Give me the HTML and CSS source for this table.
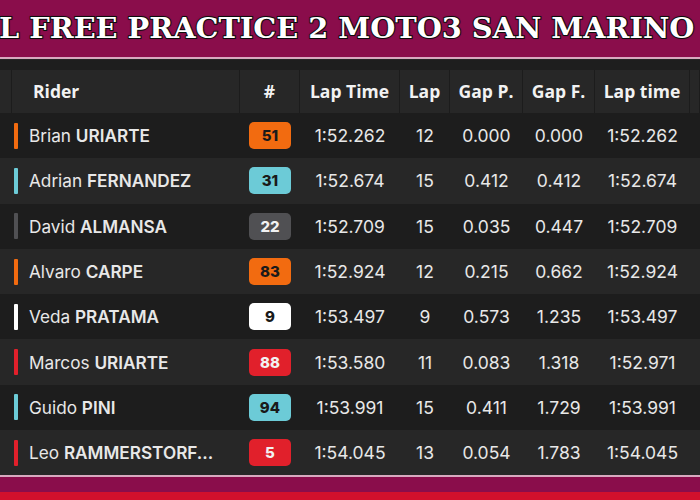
FILE: index.html
```html
<!DOCTYPE html>
<html>
<head>
<meta charset="utf-8">
<link rel="stylesheet" href="styles.css">
</head>
<body>
<div class="page">
  <header class="banner">
    <h1 class="title">L FREE PRACTICE 2 MOTO3 SAN MARINO</h1>
  </header>
  <div class="table">
    <div class="thead">
      <div class="th"></div>
      <div class="th th-rider">Rider</div>
      <div class="th">#</div>
      <div class="th">Lap Time</div>
      <div class="th">Lap</div>
      <div class="th">Gap P.</div>
      <div class="th">Gap F.</div>
      <div class="th">Lap time</div>
      <div class="th"></div>
    </div>
    <div class="row">
      <div class="cell"></div>
      <div class="cell rider"><span class="bar orange"></span><span>Brian <b>URIARTE</b></span></div>
      <div class="cell"><span class="badge orange">51</span></div>
      <div class="cell">1:52.262</div><div class="cell">12</div><div class="cell">0.000</div><div class="cell">0.000</div><div class="cell">1:52.262</div><div class="cell"></div>
    </div>
    <div class="row alt">
      <div class="cell"></div>
      <div class="cell rider"><span class="bar cyan"></span><span>Adrian <b>FERNANDEZ</b></span></div>
      <div class="cell"><span class="badge cyan">31</span></div>
      <div class="cell">1:52.674</div><div class="cell">15</div><div class="cell">0.412</div><div class="cell">0.412</div><div class="cell">1:52.674</div><div class="cell"></div>
    </div>
    <div class="row">
      <div class="cell"></div>
      <div class="cell rider"><span class="bar gray"></span><span>David <b>ALMANSA</b></span></div>
      <div class="cell"><span class="badge gray">22</span></div>
      <div class="cell">1:52.709</div><div class="cell">15</div><div class="cell">0.035</div><div class="cell">0.447</div><div class="cell">1:52.709</div><div class="cell"></div>
    </div>
    <div class="row alt">
      <div class="cell"></div>
      <div class="cell rider"><span class="bar orange"></span><span>Alvaro <b>CARPE</b></span></div>
      <div class="cell"><span class="badge orange">83</span></div>
      <div class="cell">1:52.924</div><div class="cell">12</div><div class="cell">0.215</div><div class="cell">0.662</div><div class="cell">1:52.924</div><div class="cell"></div>
    </div>
    <div class="row">
      <div class="cell"></div>
      <div class="cell rider"><span class="bar white"></span><span>Veda <b>PRATAMA</b></span></div>
      <div class="cell"><span class="badge white">9</span></div>
      <div class="cell">1:53.497</div><div class="cell">9</div><div class="cell">0.573</div><div class="cell">1.235</div><div class="cell">1:53.497</div><div class="cell"></div>
    </div>
    <div class="row alt">
      <div class="cell"></div>
      <div class="cell rider"><span class="bar red"></span><span>Marcos <b>URIARTE</b></span></div>
      <div class="cell"><span class="badge red">88</span></div>
      <div class="cell">1:53.580</div><div class="cell">11</div><div class="cell">0.083</div><div class="cell">1.318</div><div class="cell">1:52.971</div><div class="cell"></div>
    </div>
    <div class="row">
      <div class="cell"></div>
      <div class="cell rider"><span class="bar cyan"></span><span>Guido <b>PINI</b></span></div>
      <div class="cell"><span class="badge cyan">94</span></div>
      <div class="cell">1:53.991</div><div class="cell">15</div><div class="cell">0.411</div><div class="cell">1.729</div><div class="cell">1:53.991</div><div class="cell"></div>
    </div>
    <div class="row alt">
      <div class="cell"></div>
      <div class="cell rider"><span class="bar red"></span><span>Leo <b>RAMMERSTORF...</b></span></div>
      <div class="cell"><span class="badge red">5</span></div>
      <div class="cell">1:54.045</div><div class="cell">13</div><div class="cell">0.054</div><div class="cell">1.783</div><div class="cell">1:54.045</div><div class="cell"></div>
    </div>
  </div>
  <footer class="footer">
    <div class="footer-band"></div>
    <div class="footer-red"></div>
  </footer>
</div>
</body>
</html>
```

FILE: styles.css
```css
* { box-sizing: border-box; }
html, body { margin: 0; padding: 0; }
body {
  width: 700px;
  height: 500px;
  overflow: hidden;
  background: #1f1f1f;
  font-family: Inter, "Liberation Sans", sans-serif;
}
.page {
  display: flex;
  flex-direction: column;
  height: 500px;
}
.banner {
  height: 59px;
  background: #8a0d4b;
  border-bottom: 2px solid #d8a9bf;
  overflow: hidden;
  display: flex;
  align-items: center;
}
.title {
  margin: 0 0 0 -1px;
  padding: 0 0 2px 0;
  white-space: nowrap;
  font-family: "DejaVu Serif", "Liberation Serif", serif;
  font-weight: bold;
  font-size: 28.8px;
  color: #ffffff;
  -webkit-text-stroke: 2px #111;
  paint-order: stroke fill;
  text-shadow: 0 0 2px #000;
}
.table {
  display: flex;
  flex-direction: column;
}
.thead, .row {
  display: grid;
  grid-template-columns: 12px 228px 60px 100px 50px 73px 72px 95px 10px;
}
.thead {
  height: 54px;
  background: #1e1e1e;
  padding-top: 10px;
  border-top: 1px solid #252525;
}
.th {
  background: #272727;
  border-right: 1px solid #1c1c1c;
  color: #f2f2f2;
  font-family: "Open Sans", "Liberation Sans", sans-serif;
  font-weight: bold;
  font-size: 17.5px;
  display: flex;
  align-items: center;
  justify-content: center;
  padding-bottom: 2px;
}
.th-rider {
  justify-content: flex-start;
  padding-left: 21px;
}
.row {
  height: 45.3px;
  background: #1d1d1d;
  color: #e8e8e8;
  font-size: 17.5px;
}
.row.alt { background: #272727; }
.cell {
  display: flex;
  align-items: center;
  justify-content: center;
  white-space: nowrap;
}
.rider {
  justify-content: flex-start;
  padding-left: 2px;
  gap: 11px;
  font-size: 17.2px;
}
.rider b { font-weight: 600; }
.bar {
  width: 4px;
  height: 26px;
  border-radius: 1px;
}
.badge {
  width: 42px;
  height: 27px;
  border-radius: 5px;
  display: flex;
  align-items: center;
  justify-content: center;
  font-weight: 800;
  font-size: 15px;
  color: #1a1a1a;
}
.orange { background: #f26b10; }
.cyan { background: #6ccbd7; }
.gray { background: #505053; }
.white { background: #ffffff; }
.red { background: #e1202b; }
.badge.gray, .badge.red { color: #f2f2f2; }
.footer {
  flex: 1;
  display: flex;
  flex-direction: column;
  border-top: 2px solid #d8a9bf;
}
.footer-band {
  height: 15px;
  background: #8a0d4b;
}
.footer-red {
  flex: 1;
  background: #d1102c;
}
```
